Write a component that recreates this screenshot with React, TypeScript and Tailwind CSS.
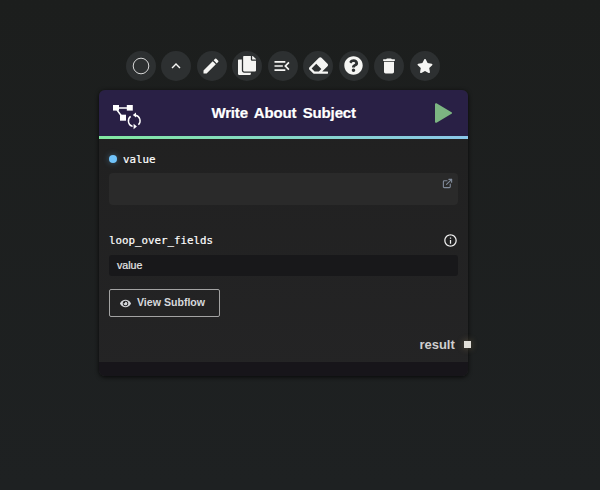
import type { ReactNode } from "react";
import { MdEdit, MdMenuOpen, MdDelete, MdInfoOutline, MdKeyboardArrowUp } from "react-icons/md";
import { FaCopy, FaEraser, FaQuestionCircle, FaStar, FaEye } from "react-icons/fa";
import { FiExternalLink } from "react-icons/fi";

function ToolButton({ children }: { children: ReactNode }) {
  return (
    <button className="flex size-[30px] items-center justify-center rounded-full bg-[#2d3031] text-[#f5f5f3]">
      {children}
    </button>
  );
}

function SubflowLoopIcon() {
  return (
    <svg width="30" height="26" viewBox="0 0 30 26" fill="none">
      <g fill="#fff">
        <rect x="1" y="1" width="6" height="5.6" />
        <rect x="14.8" y="1" width="6" height="5.6" />
        <rect x="8" y="10.7" width="6" height="6" />
      </g>
      <path d="M6 4H15M5 6L9.5 12" stroke="#fff" strokeWidth="1.5" />
      <path
        d="M20.6 22.4A5.7 5.7 0 0 1 18.6 12.4M23.6 11.2A5.7 5.7 0 0 1 26.4 20.8"
        stroke="#fff"
        strokeWidth="1.4"
      />
      <path d="M24 8.4V13.6L20.8 11ZM21.6 19.8V25.2L24.9 22.5Z" fill="#fff" />
    </svg>
  );
}

export default function App() {
  return (
    <main className="h-[490px] w-[600px] overflow-hidden bg-gradient-to-b from-[#1c1e1d] to-[#1e2122] pt-[50.5px] font-['Liberation_Sans',Arial,sans-serif]">
      <nav className="ml-[125.8px] flex gap-[5.5px]">
        <ToolButton>
          <svg width="18" height="18" viewBox="0 0 18 18" fill="none">
            <circle cx="9" cy="9" r="7.8" stroke="#d6d6d6" strokeWidth="1" />
          </svg>
        </ToolButton>
        <ToolButton><MdKeyboardArrowUp size={18} className="-ml-px" /></ToolButton>
        <ToolButton><MdEdit size={20} className="-ml-px" /></ToolButton>
        <ToolButton><FaCopy className="-ml-px h-[19px] w-[18px]" preserveAspectRatio="none" /></ToolButton>
        <ToolButton><MdMenuOpen size={20} className="-ml-px" /></ToolButton>
        <ToolButton><FaEraser size={19} /></ToolButton>
        <ToolButton><FaQuestionCircle size={19} /></ToolButton>
        <ToolButton><MdDelete size={20} /></ToolButton>
        <ToolButton><FaStar size={16} /></ToolButton>
      </nav>

      <section className="ml-[98.5px] mt-[9.5px] w-[369.8px] rounded-[6px] bg-gradient-to-b from-[#202020] to-[#242425] shadow-[0_1px_4px_rgba(0,0,0,0.8)]">
        <header className="flex h-[46px] items-center justify-between rounded-t-[6px] bg-[#292045] pl-[13.5px] pr-[15px]">
          <div className="w-[30px] pt-[7px]"><SubflowLoopIcon /></div>
          <h1 className="-ml-[9px] text-[15px] font-bold leading-5 tracking-[-0.15px] text-white [-webkit-text-stroke:0.2px] [word-spacing:2.4px]">Write About Subject</h1>
          <svg width="19" height="20" viewBox="0 0 19 20">
            <path d="M2 1.2L17 10L2 18.8Z" fill="#7cb582" stroke="#7cb582" strokeWidth="2" strokeLinejoin="round" />
          </svg>
        </header>
        <div className="h-[3px] bg-gradient-to-r from-[#82e8a1] to-[#8ac7e8]" />
        <div className="h-[223px] px-[10.5px] pt-[12px]">
          <div className="flex h-4 items-center gap-[6px]">
            <span className="size-2 rounded-full bg-[#70c3fa] shadow-[0_0_6px_rgba(112,195,250,0.4)]" />
            <span className="pt-[2px] font-['DejaVu_Sans_Mono',monospace] text-[10.8px] leading-4 text-white [-webkit-text-stroke:0.2px]">value</span>
          </div>
          <div className="mt-[6px] flex h-[32px] justify-end rounded-[4px] bg-[#2a2a2a] pr-[5px] pt-[5px]">
            <FiExternalLink size={11} className="text-[#818b9b]" strokeWidth={2.4} />
          </div>
          <div className="mt-[27px] flex h-4 items-center justify-between">
            <span className="pt-[2px] font-['DejaVu_Sans_Mono',monospace] text-[10.8px] leading-4 text-white [-webkit-text-stroke:0.2px]">loop_over_fields</span>
            <MdInfoOutline size={15} className="text-[#eeeeee]" />
          </div>
          <div className="mt-[7px] flex h-[21px] items-center rounded-[3px] bg-[#18181a] px-2 text-[10.6px] text-[#e8e8e8] [-webkit-text-stroke:0.2px]">value</div>
          <button className="mt-[13px] flex h-[28px] w-[111px] items-center gap-[6px] rounded-[2px] border border-[#a3a3a3] px-[10px] text-[10.6px] font-bold text-[#d6d8dc]">
            <FaEye size={11} />
            <span className="-mt-px whitespace-nowrap">View Subflow</span>
          </button>
          <div className="-mr-[13.5px] mt-[20px] flex h-4 items-center justify-end gap-[9.5px]">
            <span className="text-[13px] font-bold leading-4 text-[#cfcfcf]">result</span>
            <span className="-mt-px size-[7px] bg-[#e2dfd9] shadow-[0_0_7px_rgba(220,190,120,0.35)]" />
          </div>
        </div>
        <footer className="h-[14px] rounded-b-[6px] bg-[#17151a]" />
      </section>
    </main>
  );
}
